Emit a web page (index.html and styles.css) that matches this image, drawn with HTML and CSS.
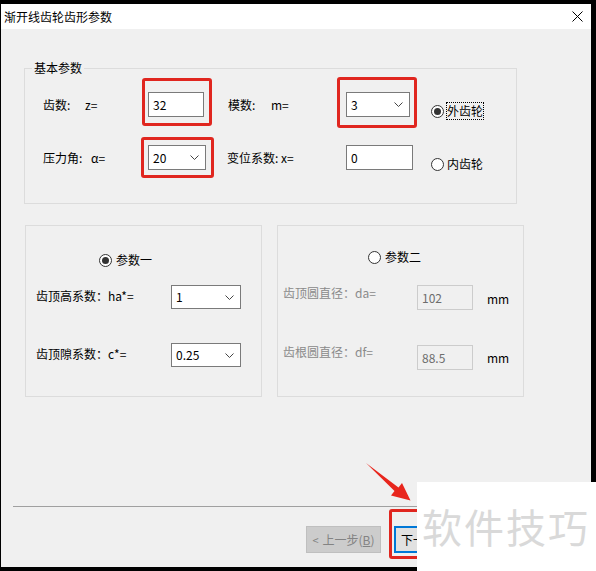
FILE: index.html
```html
<!DOCTYPE html>
<html lang="zh-CN">
<head>
<meta charset="utf-8">
<title>渐开线齿轮齿形参数</title>
<link rel="stylesheet" href="styles.css">
</head>
<body>
<div class="window">
  <div class="titlebar">
    <span class="title">渐开线齿轮齿形参数</span>
    <svg class="close" width="11" height="11" viewBox="0 0 11 11"><path d="M0.5 0.5 L10.5 10.5 M10.5 0.5 L0.5 10.5" stroke="#000" stroke-width="1" fill="none"/></svg>
  </div>
  <div class="content">
    <div class="group group-basic">
      <div class="legend">基本参数</div>
      <div class="basic-grid">
        <div class="lbl"><span class="k1">齿数:</span>z=</div>
        <div class="ctl"><div class="edit w56 hl hl-z">32</div></div>
        <div class="lbl lbl2"><span class="k3">模数:</span>m=</div>
        <div class="ctl"><div class="combo w64 hl hl-m"><span>3</span><svg width="9" height="5" viewBox="0 0 9 5"><polyline points="0.5,0.5 4.5,4.5 8.5,0.5" fill="none" stroke="#444"/></svg></div></div>
        <div class="radio"><span class="dot on"></span><span class="rtext focus">外齿轮</span></div>

        <div class="lbl"><span class="k2">压力角:</span>α=</div>
        <div class="ctl"><div class="combo w58 hl hl-a"><span>20</span><svg width="9" height="5" viewBox="0 0 9 5"><polyline points="0.5,0.5 4.5,4.5 8.5,0.5" fill="none" stroke="#444"/></svg></div></div>
        <div class="lbl">变位系数: x=</div>
        <div class="ctl"><div class="edit w67">0</div></div>
        <div class="radio"><span class="dot"></span><span class="rtext">内齿轮</span></div>
      </div>
    </div>

    <div class="groups">
      <div class="group g-left">
        <div class="radio r-one"><span class="dot on"></span><span class="rtext">参数一</span></div>
        <div class="prow pr1">
          <span class="plbl">齿顶高系数：ha*=</span>
          <div class="combo w70"><span>1</span><svg width="9" height="5" viewBox="0 0 9 5"><polyline points="0.5,0.5 4.5,4.5 8.5,0.5" fill="none" stroke="#444"/></svg></div>
        </div>
        <div class="prow pr2">
          <span class="plbl">齿顶隙系数：c*=</span>
          <div class="combo w70"><span>0.25</span><svg width="9" height="5" viewBox="0 0 9 5"><polyline points="0.5,0.5 4.5,4.5 8.5,0.5" fill="none" stroke="#444"/></svg></div>
        </div>
      </div>
      <div class="group g-right">
        <div class="radio r-two"><span class="dot"></span><span class="rtext">参数二</span></div>
        <div class="prow qr1">
          <span class="plbl dis">齿顶圆直径：da=</span>
          <div class="edit w56 disabled">102</div>
          <span class="unit">mm</span>
        </div>
        <div class="prow qr2">
          <span class="plbl dis">齿根圆直径：df=</span>
          <div class="edit w56 disabled">88.5</div>
          <span class="unit">mm</span>
        </div>
      </div>
    </div>

    <div class="sep"></div>

    <div class="buttons">
      <div class="btn btn-disabled"><span class="lt">&lt;</span>上一步(<u>B</u>)</div>
      <div class="btn btn-default hl hl-next">下一步(<u>N</u>) &gt;</div>
    </div>
  </div>
</div>

<svg class="arrow" width="596" height="571" viewBox="0 0 596 571">
  <polygon points="366,463 398.5,487.5 402,483 410.5,500.5 391,495.5 394.5,491" fill="#e8261d"/>
</svg>

<div class="watermark">软件技巧</div>
</body>
</html>
```

FILE: styles.css
```css
* { box-sizing: border-box; }

html, body {
  margin: 0;
  padding: 0;
}

body {
  position: relative;
  width: 596px;
  height: 571px;
  overflow: hidden;
  background: #000;
  font-family: "Noto Sans CJK SC", "Noto Sans", sans-serif;
  font-size: 12px;
  line-height: 16px;
  color: #000;
}

.window {
  position: relative;
  margin: 4px 5px 0 1px;
  height: 563px;
  background: #f0f0f0;
}

.titlebar {
  height: 25px;
  background: #fff;
  display: flex;
  align-items: center;
  justify-content: space-between;
  padding: 0 8px 0 3px;
}

.title {
  font-size: 12px;
  line-height: 16px;
}

.close { display: block; }

.content {
  display: flex;
  flex-direction: column;
}

.group {
  border: 1px solid #dcdcdc;
}

.group-basic {
  margin: 39px 0 0 23px;
  width: 493px;
  height: 136px;
}

.legend {
  margin: -9px 0 0 7px;
  padding: 0 2px;
  width: max-content;
  background: #f0f0f0;
  line-height: 16px;
}

.basic-grid {
  margin-top: 16px;
  padding-left: 18px;
  display: grid;
  grid-template-columns: 105px 79px 119px 85px auto;
  grid-template-rows: 25px 25px;
  row-gap: 28px;
  align-items: center;
}

.lbl { white-space: nowrap; }
.lbl2 { padding-left: 1px; }
.k1 { display: inline-block; width: 42px; }
.k2 { display: inline-block; width: 48px; }
.k3 { display: inline-block; width: 43px; }

.ctl { display: flex; align-items: center; }

.edit, .combo {
  height: 25px;
  background: #fff;
  border: 1px solid #7a7a7a;
  display: flex;
  align-items: center;
  padding-left: 4px;
}

.combo {
  height: 24px;
  justify-content: space-between;
  padding-right: 6px;
}
.combo svg { display: block; }

.w56 { width: 56px; }
.w58 { width: 58px; height: 25px; }
.w64 { width: 64px; height: 25px; }
.w67 { width: 67px; }
.w70 { width: 70px; }

.edit.disabled {
  background: #f0f0f0;
  border-color: #cccccc;
  color: #6d6d6d;
}

/* radio buttons */
.radio {
  display: flex;
  align-items: center;
  height: 18px;
  align-self: end;
}

.basic-grid .radio { margin-bottom: -3px; }

.dot {
  width: 13px;
  height: 13px;
  border: 1px solid #333;
  border-radius: 50%;
  background: #fff;
  display: flex;
  align-items: center;
  justify-content: center;
}
.dot.on::before {
  content: "";
  width: 7px;
  height: 7px;
  border-radius: 50%;
  background: #333;
}

.rtext {
  margin-left: 2px;
  border: 1px dotted transparent;
  line-height: 16px;
}
.rtext.focus { border-color: #000; }

/* lower groups */
.groups {
  display: flex;
  margin: 21px 0 0 24px;
  gap: 15px;
}

.g-left {
  width: 237px;
  height: 172px;
  display: flex;
  flex-direction: column;
}

.g-right {
  width: 247px;
  height: 172px;
  display: flex;
  flex-direction: column;
}

.r-one { margin: 26px 0 0 73px; align-self: flex-start; height: 16px; }
.r-one .rtext { margin-left: 3px; }
.r-two { margin: 23px 0 0 90px; align-self: flex-start; height: 16px; }
.r-two .rtext { margin-left: 3px; }

.prow {
  display: flex;
  align-items: center;
}

.g-left .prow { padding-left: 10px; }
.g-left .plbl { width: 135px; margin-top: -3px; }
.pr1 { margin-top: 17px; }
.pr2 { margin-top: 34px; }

.g-right .prow { padding-left: 5px; }
.g-right .plbl { width: 134px; margin-top: -9px; }
.qr1 { margin-top: 20px; }
.qr2 { margin-top: 35px; }
.qr2 .plbl { margin-top: -11px; }

.plbl.dis { color: #8a8a8a; }

.unit { margin-left: 14px; padding-top: 2px; }
.qr2 .unit { padding-top: 0; }

.sep {
  margin: 109px 12px 0 12px;
  height: 1px;
  background: #a0a0a0;
}

.buttons {
  display: flex;
  gap: 13px;
  margin: 19px 0 0 305px;
}

.btn {
  width: 75px;
  height: 27px;
  border: 1px solid #adadad;
  background: #e1e1e1;
  display: flex;
  align-items: center;
  justify-content: center;
  white-space: nowrap;
}

.btn-disabled {
  background: #cccccc;
  border-color: #bfbfbf;
  color: #838383;
}

.lt { margin-right: 4px; font-size: 11px; }

.btn-default {
  border: 2px solid #0078d7;
  justify-content: flex-start;
  padding-left: 5px;
}

/* red annotation boxes */
.hl { position: relative; }
.hl::after {
  content: "";
  position: absolute;
  border: 3px solid #e0261f;
  border-radius: 3px;
}
.hl-z::after { top: -15px; left: -7px; right: -9px; bottom: -10px; }
.hl-a::after { top: -9px; left: -8px; right: -9px; bottom: -9px; }
.hl-m::after { top: -16px; left: -10px; right: -8px; bottom: -12px; }
.hl-next::after { top: -19px; left: -7px; right: -7px; bottom: -8px; }

.arrow {
  position: absolute;
  left: 0;
  top: 0;
  pointer-events: none;
}

.watermark {
  position: absolute;
  left: 417px;
  top: 482px;
  width: 179px;
  height: 89px;
  background: #fff;
  color: #d9d9d9;
  font-size: 40px;
  line-height: 50px;
  letter-spacing: 2px;
  padding: 19px 0 0 5px;
  white-space: nowrap;
}
```
